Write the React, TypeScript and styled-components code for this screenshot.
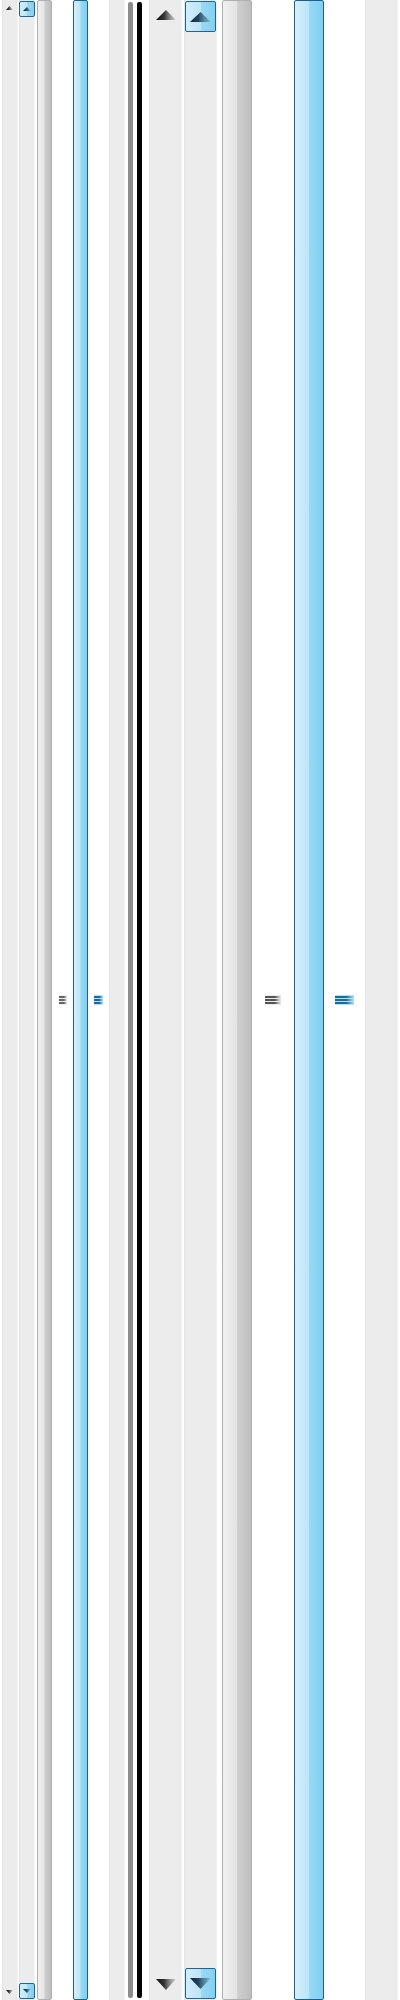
import styled, { createGlobalStyle } from "styled-components"

const GlobalStyle = createGlobalStyle`
    html, body {
        margin: 0;
        padding: 0;
        background: #FFFFFF;
    }
`

const Arrow = ({ dir, width, height, dark, id }: { dir: "up" | "down"; width: number; height: number; dark: string; id: string }) => (
    <svg width={width} height={height} viewBox="0 0 20 10" preserveAspectRatio="none" style={{ display: "block" }}>
        <defs>
            <linearGradient id={id} x1="0" x2="1" y1="0" y2="0">
                <stop offset="0" stopColor={dark} />
                <stop offset="0.4" stopColor={dark} stopOpacity="0.85" />
                <stop offset="0.6" stopColor={dark} stopOpacity="0.55" />
                <stop offset="1" stopColor={dark} stopOpacity="0.1" />
            </linearGradient>
        </defs>
        <polygon points={dir === "up" ? "10,0 20,10 0,10" : "0,0 20,0 10,10"} fill={`url(#${id})`} />
    </svg>
)

const Gripper = ({ width, color, back }: { width: number; color: string; back: string }) => (
    <GripBox $width={width} $back={back}>
        <GripLine $color={color} />
        <GripLine $color={color} />
        <GripLine $color={color} />
    </GripBox>
)

const App = () => {
    return (
        <Page>
            <GlobalStyle />
            <Track $width={16} $ml={2} $padY={6} $align="flex-start" $padX={3}>
                <Arrow dir="up" width={7} height={4} dark="#111111" id="a1" />
                <Arrow dir="down" width={7} height={4} dark="#111111" id="a2" />
            </Track>
            <Track $width={16} $ml={1} $padY={1} $align="center" $padX={0}>
                <ArrowButton $size={16}>
                    <Arrow dir="up" width={8} height={4} dark="#06263C" id="a3" />
                </ArrowButton>
                <ArrowButton $size={16}>
                    <Arrow dir="down" width={8} height={4} dark="#06263C" id="a4" />
                </ArrowButton>
            </Track>
            <Thumb $width={15} $ml={2} />
            <Gap $width={21}>
                <Gripper width={8} color="#666666" back="#ECECEC" />
            </Gap>
            <Thumb $width={15} $ml={0} $active />
            <Gap $width={21}>
                <Gripper width={9} color="#1A6A9A" back="#B4E2F7" />
            </Gap>
            <Track $width={16} $ml={0} $padY={0} $align="center" $padX={0} />
            <FlatBar $color="#8C8C8C" $ml={3} />
            <FlatBar $color="#000000" $ml={4} />
            <Track $width={33} $ml={7} $padY={10} $align="center" $padX={0}>
                <Arrow dir="up" width={20} height={10} dark="#111111" id="a5" />
                <Arrow dir="down" width={20} height={11} dark="#111111" id="a6" />
            </Track>
            <Track $width={33} $ml={2} $padY={1} $align="center" $padX={0}>
                <ArrowButton $size={31}>
                    <Arrow dir="up" width={21} height={10} dark="#06263C" id="a7" />
                </ArrowButton>
                <ArrowButton $size={31}>
                    <Arrow dir="down" width={21} height={11} dark="#06263C" id="a8" />
                </ArrowButton>
            </Track>
            <Thumb $width={30} $ml={5} />
            <Gap $width={42}>
                <Gripper width={16} color="#555555" back="#ECECEC" />
            </Gap>
            <Thumb $width={30} $ml={0} $active />
            <Gap $width={41}>
                <Gripper width={19} color="#1A6A9A" back="#B4E2F7" />
            </Gap>
            <Track $width={33} $ml={0} $padY={0} $align="center" $padX={0} />
        </Page>
    )
}

const Page = styled.div`
    display: flex;
    align-items: stretch;
    width: 400px;
    height: 2000px;
    overflow: hidden;
    background: #FFFFFF;
`

const Track = styled.div<{ $width: number; $ml: number; $padY: number; $padX: number; $align: string }>`
    flex: none;
    box-sizing: border-box;
    display: flex;
    flex-direction: column;
    justify-content: space-between;
    align-items: ${(p) => p.$align};
    width: ${(p) => p.$width}px;
    margin-left: ${(p) => p.$ml}px;
    padding: ${(p) => p.$padY}px ${(p) => p.$padX}px;
    background: #ECECEC;
    border-left: 1px solid #E4E4E4;
    border-right: 1px solid #F2F2F2;
`

const ArrowButton = styled.div<{ $size: number }>`
    box-sizing: border-box;
    display: flex;
    align-items: center;
    justify-content: center;
    width: ${(p) => p.$size}px;
    height: ${(p) => p.$size}px;
    border: 1px solid #1E6496;
    border-radius: 2px;
    background: linear-gradient(90deg, #D3EDFB 0%, #BDE5F8 50%, #9ADAF5 52%, #86CFF0 100%);
`

const Thumb = styled.div<{ $width: number; $ml: number; $active?: boolean }>`
    flex: none;
    box-sizing: border-box;
    width: ${(p) => p.$width}px;
    margin-left: ${(p) => p.$ml}px;
    border: 1px solid ${(p) => (p.$active ? "#1E5F8C" : "#B0B0B0")};
    border-radius: 2px;
    background: ${(p) =>
        p.$active
            ? "linear-gradient(90deg, #D6EFFB 0%, #BDE5F8 48%, #97D9F5 52%, #82CEF0 100%)"
            : "linear-gradient(90deg, #F0F0F0 0%, #E4E4E4 48%, #CFCFCF 52%, #BDBDBD 100%)"};
`

const Gap = styled.div<{ $width: number }>`
    flex: none;
    display: flex;
    align-items: center;
    justify-content: center;
    width: ${(p) => p.$width}px;
`

const FlatBar = styled.div<{ $color: string; $ml: number }>`
    flex: none;
    width: 5px;
    margin: 2px 0 2px ${(p) => p.$ml}px;
    border-radius: 2px;
    background: ${(p) => p.$color};
`

const GripBox = styled.div<{ $width: number; $back: string }>`
    box-sizing: border-box;
    display: flex;
    flex-direction: column;
    justify-content: space-between;
    width: ${(p) => p.$width}px;
    height: 10px;
    padding: 1px 0;
    background: ${(p) => p.$back};
`

const GripLine = styled.div<{ $color: string }>`
    height: 2px;
    background: linear-gradient(90deg, ${(p) => p.$color} 0%, ${(p) => p.$color} 60%, transparent 100%);
`

export default App
